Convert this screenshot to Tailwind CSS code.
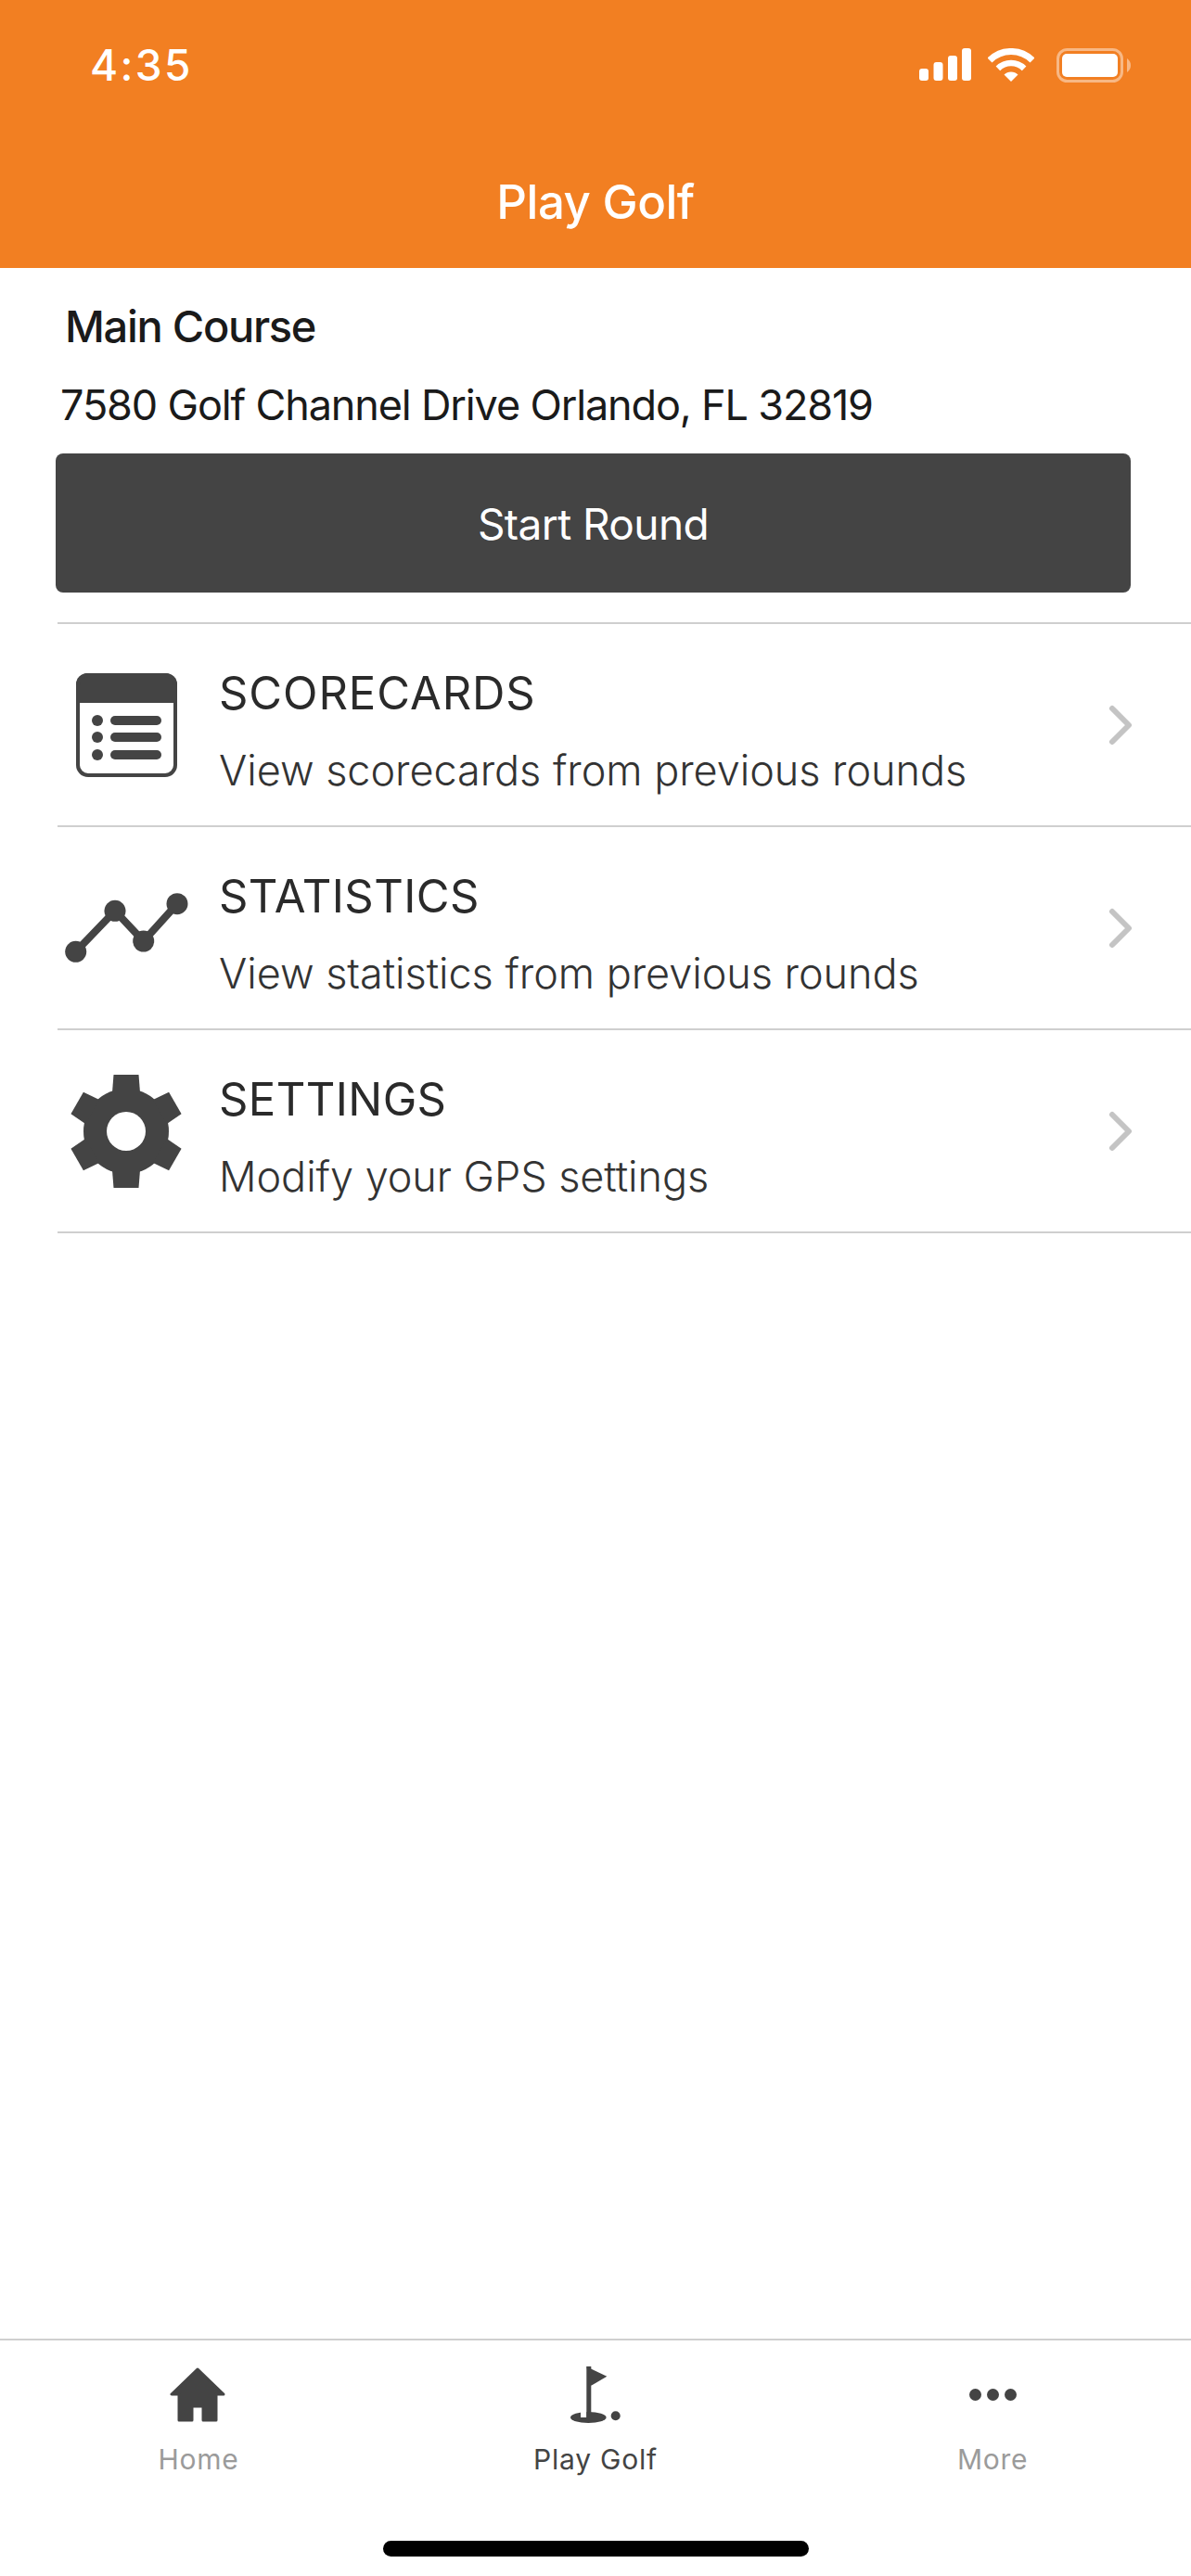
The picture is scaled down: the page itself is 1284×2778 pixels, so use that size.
<!DOCTYPE html>
<html lang="en">
<head>
  <meta charset="UTF-8" />
  <title>Play Golf</title>
  <meta name="viewport" content="width=device-width, initial-scale=1.0" />
  <script src="https://cdn.jsdelivr.net/npm/@tailwindcss/browser@4"></script>
</head>
<body class="bg-white font-['Inter',sans-serif]">
  <div class="flex flex-col h-[2778px] w-[1284px] overflow-hidden">

    <!-- header -->
    <header class="h-[289px] bg-[#f27f22] text-white flex flex-col shrink-0">
      <div class="h-[140px] flex items-center justify-between pl-[97px] pr-[65px]">
        <span class="text-[46px] leading-none font-medium tracking-[2.3px]">4:35</span>
        <div class="flex items-center">
          <svg class="w-[56px] h-[36px] mr-[18px]" viewBox="0 0 56 36" fill="#fff">
            <rect x="0" y="22" width="10" height="13" rx="3" />
            <rect x="15.5" y="15" width="10" height="20" rx="3" />
            <rect x="31" y="8" width="10" height="27" rx="3" />
            <rect x="46" y="0" width="10" height="35" rx="3" />
          </svg>
          <svg class="w-[50px] h-[37px] mr-[24px]" viewBox="0 0 50 37" fill="none" stroke="#fff">
            <path d="M2 13 A32.5 32.5 0 0 1 48 13" stroke-width="7" />
            <path d="M10.9 21.9 A20 20 0 0 1 39.1 21.9" stroke-width="6.5" />
            <path d="M25 36 L17.5 28.5 A10.6 10.6 0 0 1 32.5 28.5 Z" fill="#fff" stroke="none" />
          </svg>
          <svg class="w-[80px] h-[37px]" viewBox="0 0 80 37" fill="none">
            <rect x="1.5" y="1.5" width="69" height="34" rx="10" stroke="#fff" stroke-opacity="0.45" stroke-width="3" />
            <rect x="6" y="6" width="60" height="25" rx="5" fill="#fff" />
            <path d="M76 11 C79 13 80 16 80 18.5 C80 21 79 24 76 26 Z" fill="#fff" fill-opacity="0.45" />
          </svg>
        </div>
      </div>
      <div class="flex-1 flex items-center justify-center pt-[5px]">
        <h1 class="text-[51px] leading-none font-medium tracking-[-0.5px]">Play Golf</h1>
      </div>
    </header>

    <main class="flex-1 flex flex-col">
      <div class="pt-[38px] text-[#1a1a1a]">
        <p class="pl-[70px] text-[47px] leading-[50px] font-medium tracking-[-1.3px]">Main Course</p>
        <p class="pl-[65px] mt-[35px] text-[45px] leading-[50px] font-normal tracking-[-1.15px]">7580 Golf Channel Drive Orlando, FL 32819</p>
      </div>

      <button class="ml-[60px] mt-[27px] w-[1159px] h-[150px] rounded-[8px] bg-[#444444] text-white text-[46px] font-normal tracking-[-0.6px] pt-[2px] shrink-0">Start Round</button>

      <ul class="mt-[32px] ml-[62px] border-t-2 border-[#cfcfcf]">
        <li class="h-[219px] border-b-2 border-[#cfcfcf] flex items-center pr-[62px]">
          <div class="w-[148px] mr-[27px] flex justify-center shrink-0">
            <svg class="w-[109px] h-[112px]" viewBox="0 0 109 112" fill="#444444">
              <path d="M12 0 H97 A12 12 0 0 1 109 12 V32 H0 V12 A12 12 0 0 1 12 0 Z" />
              <rect x="2" y="2" width="105" height="108" rx="11" fill="none" stroke="#444444" stroke-width="4" />
              <circle cx="23" cy="51" r="6" /><circle cx="23" cy="69" r="6" /><circle cx="23" cy="88" r="6" />
              <rect x="37" y="46" width="55" height="10" rx="5" />
              <rect x="37" y="64" width="55" height="10" rx="5" />
              <rect x="37" y="83" width="55" height="10" rx="5" />
            </svg>
          </div>
          <div class="flex-1 pt-[15px] -ml-[1px]">
            <p class="text-[49px] leading-[50px] text-[#2a2a2a] tracking-[0.9px]">SCORECARDS</p>
            <p class="mt-[33px] text-[45px] leading-[50px] font-light text-[#333333] tracking-[-0.05px]">View scorecards from previous rounds</p>
          </div>
          <svg class="w-[28px] h-[44px]" viewBox="0 0 28 44" fill="none" stroke="#c4c4c4" stroke-width="6" stroke-linecap="round" stroke-linejoin="round">
            <path d="M5 4 L23 22 L5 40" />
          </svg>
        </li>
        <li class="h-[219px] border-b-2 border-[#cfcfcf] flex items-center pr-[62px]">
          <div class="w-[148px] mr-[27px] flex justify-center shrink-0">
            <svg class="w-[133px] h-[75px]" viewBox="0 0 133 75" fill="#444444">
              <path d="M11.7 63.3 L54 19.3 L84.7 52 L121 11.7" fill="none" stroke="#444444" stroke-width="8" />
              <circle cx="11.7" cy="63.3" r="11.5" /><circle cx="54" cy="19.3" r="11.5" />
              <circle cx="84.7" cy="52" r="11.5" /><circle cx="121" cy="11.7" r="11.5" />
            </svg>
          </div>
          <div class="flex-1 pt-[15px] -ml-[1px]">
            <p class="text-[49px] leading-[50px] text-[#2a2a2a] tracking-[0.4px]">STATISTICS</p>
            <p class="mt-[33px] text-[45px] leading-[50px] font-light text-[#333333] tracking-[-0.05px]">View statistics from previous rounds</p>
          </div>
          <svg class="w-[28px] h-[44px]" viewBox="0 0 28 44" fill="none" stroke="#c4c4c4" stroke-width="6" stroke-linecap="round" stroke-linejoin="round">
            <path d="M5 4 L23 22 L5 40" />
          </svg>
        </li>
        <li class="h-[219px] border-b-2 border-[#cfcfcf] flex items-center pr-[62px]">
          <div class="w-[148px] mr-[27px] flex justify-center shrink-0">
            <svg class="w-[124px] h-[124px]" viewBox="-62 -62 124 124" fill="#444444">
              <circle r="46" />
              <path d="M-13.5 -61 H13.5 L15 -42 H-15 Z" />
              <path d="M-13.5 -61 H13.5 L15 -42 H-15 Z" transform="rotate(60)" />
              <path d="M-13.5 -61 H13.5 L15 -42 H-15 Z" transform="rotate(120)" />
              <path d="M-13.5 -61 H13.5 L15 -42 H-15 Z" transform="rotate(180)" />
              <path d="M-13.5 -61 H13.5 L15 -42 H-15 Z" transform="rotate(240)" />
              <path d="M-13.5 -61 H13.5 L15 -42 H-15 Z" transform="rotate(300)" />
              <circle r="21" fill="#fff" />
            </svg>
          </div>
          <div class="flex-1 pt-[15px] -ml-[1px]">
            <p class="text-[49px] leading-[50px] text-[#2a2a2a] tracking-[0.4px]">SETTINGS</p>
            <p class="mt-[33px] text-[45px] leading-[50px] font-light text-[#333333] tracking-[-0.05px]">Modify your GPS settings</p>
          </div>
          <svg class="w-[28px] h-[44px]" viewBox="0 0 28 44" fill="none" stroke="#c4c4c4" stroke-width="6" stroke-linecap="round" stroke-linejoin="round">
            <path d="M5 4 L23 22 L5 40" />
          </svg>
        </li>
      </ul>
    </main>

    <!-- tab bar -->
    <nav class="h-[256px] shrink-0 border-t-2 border-[#cfcfcf] flex flex-col">
      <div class="grid grid-cols-3 h-[216px]">
        <a class="flex flex-col items-center pt-[26px]">
          <div class="h-[64px] flex items-center mr-[2px]">
            <svg class="w-[60px] h-[59px]" viewBox="0 0 60 59" fill="#444444" stroke="#444444" stroke-width="3" stroke-linejoin="round">
              <path d="M30 2 L2 29 H10 V57 H24 V42 H36 V57 H50 V29 H58 Z" />
            </svg>
          </div>
          <span class="mt-[20px] text-[30px] leading-[36px] text-[#9b9b9b] tracking-[0.7px]">Home</span>
        </a>
        <a class="flex flex-col items-center pt-[26px]">
          <div class="h-[64px] flex items-center mr-[1px]">
            <svg class="w-[54px] h-[61px]" viewBox="0 0 54 61" fill="#444444">
              <ellipse cx="19.3" cy="55" rx="19.3" ry="6" />
              <rect x="11" y="47" width="6.3" height="8" fill="#fff" />
              <rect x="17.3" y="0" width="5" height="55" />
              <path d="M17.3 0.3 L39.3 10.7 L22.3 20.7 Z" />
              <circle cx="48.7" cy="53.3" r="5" />
            </svg>
          </div>
          <span class="mt-[20px] text-[30px] leading-[36px] text-[#444444] tracking-[0.8px]">Play Golf</span>
        </a>
        <a class="flex flex-col items-center pt-[26px]">
          <div class="h-[64px] flex items-center justify-center gap-[6px]">
            <span class="w-[13px] h-[13px] rounded-full bg-[#444444]"></span>
            <span class="w-[13px] h-[13px] rounded-full bg-[#444444]"></span>
            <span class="w-[13px] h-[13px] rounded-full bg-[#444444]"></span>
          </div>
          <span class="mt-[20px] text-[30px] leading-[36px] text-[#9b9b9b] tracking-[0.7px]">More</span>
        </a>
      </div>
      <div class="flex justify-center">
        <div class="w-[459px] h-[17px] rounded-full bg-black"></div>
      </div>
    </nav>
  </div>
</body>
</html>
